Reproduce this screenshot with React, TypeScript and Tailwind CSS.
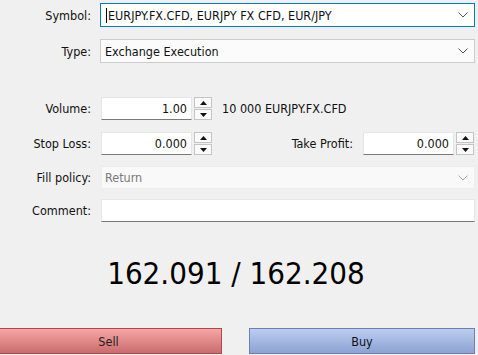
import React from "react";

const Chevron = ({ color = "#555" }: { color?: string }) => (
  <svg width="10" height="6" viewBox="0 0 10 6" className="shrink-0">
    <path d="M0.5 0.5 L5 5 L9.5 0.5" fill="none" stroke={color} strokeWidth="1" />
  </svg>
);

const Spinner = () => (
  <div className="flex flex-col w-[18px] h-[23px] ml-[2px] gap-[1px]">
    <div className="flex-1 border border-[#c4c4c4] bg-[#fafafa] flex items-center justify-center">
      <svg width="7" height="4" viewBox="0 0 7 4">
        <path d="M0 4 L3.5 0 L7 4 Z" fill="#111" />
      </svg>
    </div>
    <div className="flex-1 border border-[#c4c4c4] bg-[#fafafa] flex items-center justify-center">
      <svg width="7" height="4" viewBox="0 0 7 4">
        <path d="M0 0 L7 0 L3.5 4 Z" fill="#111" />
      </svg>
    </div>
  </div>
);

const NumInput = ({ value }: { value: string }) => (
  <div className="w-[91px] h-[23px] bg-white border border-[#e6e6e6] border-b-[#7a7a7a] flex items-center justify-end pr-[4px] pt-[2px]">
    {value}
  </div>
);

const Label = ({ children }: { children: React.ReactNode }) => (
  <div className="w-[91px] text-right shrink-0 pt-[2px]">{children}</div>
);

export default function App() {
  return (
    <div
      className="w-[478px] h-[355px] bg-[#f0f0f0] overflow-hidden text-[12.5px] text-[#111] leading-none"
      style={{ fontFamily: "'DejaVu Sans Condensed', 'DejaVu Sans', sans-serif" }}
    >
      <div className="pt-[3px]">
        {/* Symbol */}
        <div className="flex items-center h-[24px]">
          <Label>Symbol:</Label>
          <div className="ml-[9px] w-[375px] h-[24px] border border-[#0078d7] bg-white flex items-center pl-[5px] pr-[6px]">
            <span className="w-[1px] h-[15px] bg-black mr-[1px]" />
            <span className="flex-1 pt-[2px]">EURJPY.FX.CFD, EURJPY FX CFD, EUR/JPY</span>
            <Chevron />
          </div>
        </div>
        {/* Type */}
        <div className="flex items-center h-[24px] mt-[12px]">
          <Label>Type:</Label>
          <div className="ml-[9px] w-[375px] h-[24px] border border-[#cccccc] bg-[#fbfbfb] flex items-center pl-[4px] pr-[6px]">
            <span className="flex-1 pt-[2px]">Exchange Execution</span>
            <Chevron />
          </div>
        </div>
        {/* Volume */}
        <div className="flex items-center h-[23px] mt-[34px]">
          <Label>Volume:</Label>
          <div className="ml-[10px] flex items-center">
            <NumInput value="1.00" />
            <Spinner />
          </div>
          <div className="ml-[10px] pt-[2px]">10 000 EURJPY.FX.CFD</div>
        </div>
        {/* Stop loss / take profit */}
        <div className="flex items-center h-[23px] mt-[12px]">
          <Label>Stop Loss:</Label>
          <div className="ml-[10px] flex items-center">
            <NumInput value="0.000" />
            <Spinner />
          </div>
          <div className="flex-1 text-right pr-[10px] pt-[2px]">Take Profit:</div>
          <div className="flex items-center mr-[4px]">
            <NumInput value="0.000" />
            <Spinner />
          </div>
        </div>
        {/* Fill policy */}
        <div className="flex items-center h-[23px] mt-[11px]">
          <Label>Fill policy:</Label>
          <div className="ml-[10px] w-[374px] h-[23px] border border-[#ececec] bg-[#f9f9f9] flex items-center pl-[3px] pr-[6px] text-[#7a7a7a]">
            <span className="flex-1 pt-[2px]">Return</span>
            <Chevron color="#aaa" />
          </div>
        </div>
        {/* Comment */}
        <div className="flex items-center h-[23px] mt-[10px]">
          <Label>Comment:</Label>
          <div className="ml-[10px] w-[374px] h-[23px] bg-white border border-[#e6e6e6] border-b-[#7a7a7a]" />
        </div>
        {/* Price */}
        <div className="mt-[36px] h-[31px] text-[31px] leading-none text-center text-black pr-[6px]">
          162.091 / 162.208
        </div>
        {/* Buttons */}
        <div className="flex mt-[39px] h-[26px]">
          <div
            className="ml-[-5px] w-[227px] h-[26px] border border-[#b04848] flex items-center justify-center text-[#222] pt-[2px]"
            style={{ background: "linear-gradient(#f7a6a6, #c96c6c)" }}
          >
            Sell
          </div>
          <div
            className="ml-[27px] w-[226px] h-[26px] border border-[#6c80b4] flex items-center justify-center text-[#111] pt-[2px]"
            style={{ background: "linear-gradient(#bccdf2, #8ca2d2)" }}
          >
            Buy
          </div>
        </div>
      </div>
    </div>
  );
}
